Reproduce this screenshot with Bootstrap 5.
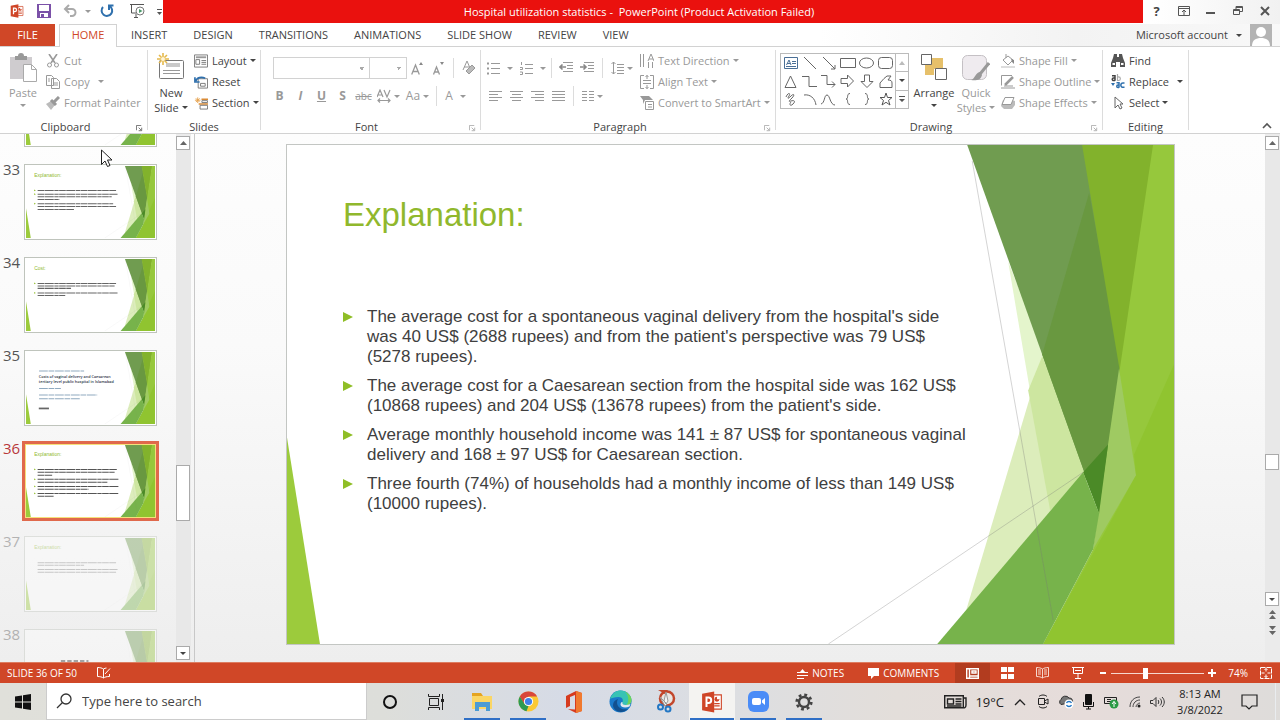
<!DOCTYPE html>
<html lang="en">
<head>
<meta charset="utf-8">
<meta name="viewport" content="width=device-width, initial-scale=1">
<title>Hospital utilization statistics - PowerPoint</title>
<link href="https://cdn.jsdelivr.net/npm/bootstrap@5.3.0/dist/css/bootstrap.min.css" rel="stylesheet">
<style>
:root{--ink:#444;--dim:#999;--accent:#d04727;--line:#d2d2d2}
body{font-family:"Open Sans","Noto Sans",sans-serif;font-size:11px;line-height:16px;color:var(--ink);background:#fff;overflow:hidden}
svg{display:block;flex:none;fill:none;stroke:none}
.btn{--bs-btn-font-size:11px;--bs-btn-line-height:16px;--bs-btn-padding-x:0;--bs-btn-padding-y:0;--bs-btn-color:var(--ink);--bs-btn-border-width:0;--bs-btn-border-radius:0;--bs-btn-disabled-opacity:1;--bs-btn-disabled-color:var(--dim);--bs-btn-disabled-border-color:transparent;display:flex;align-items:center;justify-content:center;white-space:nowrap}
.caret{width:0;height:0;border:3px solid transparent;border-top-color:currentColor;border-bottom:0;flex:none}
/* title bar */
.titlebar,.tabs,.ribbon,.status,.taskbar{flex:none}
.titlebar{height:24px;background:linear-gradient(90deg,#fff 90%,#f1f1f1)}
.qat{width:163px;padding-left:9px}
.failed{background:#ea110e;color:#fff;padding-right:28px;height:23px;font-size:11px}
.winctl{width:137px}
.winctl .btn{width:27px;height:22px}
.help{--bs-btn-font-size:13px}
/* tabs */
.tabs{height:23px;border-bottom:1px solid var(--line);background:linear-gradient(90deg,#fff 64%,#f3f3f3 84%,#f8f8f8)}
.tabs .nav-link{font-size:11px;line-height:16px;padding:3px 13px;height:22px;color:var(--ink);border-radius:0}
.tabs .file-tab{background:var(--accent);color:#fff;width:55px;margin-right:4px;padding:3px 0;text-align:center}
.tabs .nav-link.active{background:#fff;color:var(--accent);border:1px solid var(--line);border-bottom:0;height:23px;width:58px;padding:2px 0;text-align:center;margin-right:1px}
.avatar{width:22px;height:22px;background:#b4b4b4}
/* ribbon */
.ribbon{height:87px;border-bottom:1px solid var(--line);padding-top:3px}
.grp{border-right:1px solid #dcdcdc;height:80px;flex:none;display:flex;flex-direction:column}
.grp-body{height:68px;flex:none;display:flex}
.grp-name{display:flex;height:18px;flex:none;align-items:center;justify-content:center;position:relative}
.grp-name svg{position:absolute;right:4px;bottom:4px}
.cmds{display:flex;flex-direction:column}
.cmds .btn{height:21px;justify-content:flex-start;gap:4px}
.cmds .btn .caret,.tall .caret{margin-left:-1px}
.tall{flex-direction:column;justify-content:flex-start;padding-top:3px;align-items:center}
.tall span{line-height:15px}
.tall svg+span{margin-top:3px}
.tools-a{padding-top:7px}
.tools-b{padding-top:6px}
.tool{width:21px;height:22px;--bs-btn-font-size:12px}
.tool.narrow{--bs-btn-font-size:10px}
.tool.with-caret{width:29px;gap:3px}
.vr-line{width:1px;height:20px;background:#dcdcdc;margin:0 4px}
.combo{appearance:none;height:22px;border:1px solid var(--line);border-radius:0;font-size:11px;padding:0;background-color:#fff;background-image:linear-gradient(45deg,transparent 50%,#aaa 50%),linear-gradient(-45deg,transparent 50%,#aaa 50%);background-size:3px 3px;background-repeat:no-repeat;background-position:right 7px top 9px,right 4px top 9px}
.shapes{width:116px;display:grid;grid-template-columns:repeat(6,1fr);grid-template-rows:repeat(3,1fr);border:1px solid #bbb;height:56px;margin-top:3px;place-items:center}
.shapes .btn{width:18px;height:18px}
.spin{width:13px;height:56px;margin-top:3px;border:1px solid #bbb;border-left:0}
.spin .btn{flex:1;border-bottom:1px solid #bbb}
.spin .btn:last-child{border-bottom:0}
/* work area */
.work{flex:1 1 0;background:linear-gradient(#fdfdfd,#fafafa 40%,#eee);min-height:0}
.pane{width:176px;overflow:hidden}
.thumbs{margin-top:-63px}
.thumbs li{display:flex;height:93px}
.num{width:24px;padding-left:3px;font-size:15px;line-height:10px;color:#555}
.thumb{width:133px;height:76px;border:1px solid #bfc4bc;padding:1px;background:#fff;overflow:hidden}
.thumb svg{width:100%;height:100%}
.on .thumb{box-shadow:0 0 0 2px #e0694c;border-color:#e0694c;background:#f5e07a}
.on .num{color:#b8383a}
.faded{opacity:.4}
.sbar{width:15px;background:#ebebeb;padding-top:2px}
.sbar .btn,.grip{width:14px;height:14px;border:1px solid #aaa;background:#fff}
.sbar .plain{border:0;background:none;height:16px}
.sbar .last{margin-bottom:2px}
.rest{background:#e8e8e8}
.split{width:4px;border-right:1px solid #c8c8c8}
.stage{padding:10px 90px 0 91px}
.slide{position:relative;aspect-ratio:889/501;border:1px solid #c3c6c3;background:#fff;font-family:"Liberation Sans",Arial,sans-serif;color:#404040}
.slide>svg{position:absolute;inset:0;width:100%;height:100%}
.slide-text{position:relative;padding:50px 0 0 56px}
.slide h1{font-size:33px;line-height:40px;color:#90b82c;margin:0 0 72px}
.slide li{font-size:17px;line-height:20px;margin-bottom:9px;display:flex;max-width:628px}
.slide li::before{content:"";flex:none;width:0;height:0;border:5px solid transparent;border-left:10px solid #8fbe26;border-right:0;margin:5px 14px 0 0}
.pointer{position:absolute;left:101px;top:149px}
/* status bar */
.status{height:21px;background:var(--accent);color:#fff;border-top:1px solid #dd7c60;font-size:10px;padding-left:7px}
.status .btn{--bs-btn-color:#fff;--bs-btn-font-size:10px;gap:4px;height:20px}
.view{width:35px}
.view.active{background:#b23c1f;border-color:transparent}
.zoom{width:93px;height:16px;appearance:none;background:linear-gradient(#f6d8ce,#f6d8ce) center/100% 1px no-repeat;margin:0}
.zoom::-webkit-slider-thumb{appearance:none;width:5px;height:11px;background:#fff;border:0}
/* taskbar */
.taskbar{height:37px;background:linear-gradient(90deg,#e0e0da,#dddeda 30%,#d6dbe6 44%,#dcdee2 56%,#e3deda 70%,#e6dcda 85%,#dedcda)}
.task{width:46px;height:37px;position:relative}
.task.run::after{content:"";position:absolute;bottom:0;left:5px;right:5px;height:2px;background:#2f6fc6}
.task.front{background:#f4f3f1}
.task.front::after{left:1px;right:1px}
.search{width:321px;background:#fff;border:1px solid #ccc;border-width:0 1px 1px;padding-left:9px;gap:10px}
.search input{border:0;outline:0;font-size:13px;color:#444;width:220px;padding:0}
.search input::placeholder{color:#444;opacity:1}
.tray{color:#222}
.tray .btn{width:23px;--bs-btn-color:#222}
.tray .weather{width:auto;--bs-btn-font-size:13px}
.clock{width:62px;line-height:16px;text-align:center;font-size:11px}
.bell{margin:0 14px 0 7px}
</style>
</head>
<body class="d-flex flex-column vh-100">
<svg width="0" height="0" class="position-absolute" aria-hidden="true">
  <symbol id="deck" viewBox="0 0 888 500" preserveAspectRatio="none">
    <path fill="#9ccb3c" d="M0 293L33 500H0z"/>
    <path fill="#e4f5cc" d="M722 117L806 328 764 366z"/>
    <path fill="#dcedbb" d="M756 212L806 328 680 466z"/>
    <path fill="#cde6a0" d="M756 212L806 328 764 366 742 246z"/>
    <path fill="#709c50" d="M681 0H800L836 224 813 369z"/>
    <path fill="#699840" d="M803 48L836 224 813 369 756 210z"/>
    <path fill="#82b22c" d="M796 0H870L836 240z"/>
    <path fill="#96c83c" d="M867 0H888V500H757L807 405z"/>
    <path fill="#9fca62" d="M833 224L850 331 807 405 822 300z"/>
    <path fill="#90c430" d="M888 220L848 310 850 331 757 500H888z"/>
    <path fill="#4b8a27" d="M822 300L797 328 813 369z"/>
    <path fill="#77b34b" d="M651 500L797 328 813 369 807 405 757 500z"/>
    <path stroke="#777" stroke-opacity=".32" d="M686 16L767 476M542 500L797 328"/>
  </symbol>
  <symbol id="launch" viewBox="0 0 8 8"><path stroke="currentColor" d="M.5 6V.5H6M3 3l3 3M6.500 3v3.500H3"/></symbol>
  <symbol id="ppt" viewBox="0 0 20 20"><path fill="#fff" stroke="#cf4527" d="M10 3.500h8.500v13H10z"/><path stroke="#cf4527" d="M12 11.500h5M12 13.500h5"/><circle cx="14.500" cy="7.500" r="2.200" fill="#cf4527"/><path fill="#fff" d="M14.500 7.500V5h2.500v2.500z"/><path fill="#cf4527" d="M1 2.500L12 .5v19L1 17.500z"/><path stroke="#fff" stroke-width="1.800" d="M5 14.500V6h1.800a2.300 2.300 0 010 5H5"/></symbol>
</svg>

<header class="titlebar d-flex">
  <div class="qat d-flex align-items-start pt-1">
    <svg width="16" height="14"><use href="#ppt"/></svg>
    <button class="btn ms-2 ps-1" aria-label="Save"><svg width="14" height="14" viewBox="0 0 14 14"><path fill="#7b51a8" d="M0 0h14v14H0z"/><path fill="#fff" d="M2 1h10v6H2zM3 9h8v4H3z"/><path fill="#7b51a8" d="M4 10h3v3H4z"/></svg></button>
    <button class="btn ms-2 ps-1 gap-2" aria-label="Undo" disabled><svg width="14" height="14" viewBox="0 0 14 14"><path stroke="#aaa" stroke-width="2" d="M2 5h7a3.500 3.500 0 010 7H7M6 1L2 5l4 4"/></svg><i class="caret"></i></button>
    <button class="btn ms-2" aria-label="Repeat"><svg width="15" height="14" viewBox="0 0 15 14"><path stroke="#2f70ad" stroke-width="2" d="M10 6V1.500h4.500M10.500 2A5.300 5.300 0 114 3"/></svg></button>
    <button class="btn ms-3 gap-2" aria-label="Start slide show"><svg width="15" height="15" viewBox="0 0 15 15"><path stroke="#555" d="M0 .5h14M1.500 1v8H6M4 13.500h4M6 10v3"/><circle cx="10" cy="7" r="4" fill="#fff" stroke="#777"/><path fill="#4a9a6a" d="M9 5l3.500 2L9 9z"/></svg><svg class="ms-1" width="5" height="8" viewBox="0 0 5 8"><path stroke="#555" d="M0 1.500h5"/><path fill="#555" d="M0 4h5L2.500 7z"/></svg></button>
  </div>
  <div class="failed flex-grow-1 d-flex align-items-center justify-content-center"><span>Hospital utilization statistics -&nbsp; PowerPoint (Product Activation Failed)</span></div>
  <div class="winctl d-flex">
    <button class="btn fw-bold help" aria-label="Help">?</button>
    <button class="btn" aria-label="Ribbon display"><svg width="12" height="10" viewBox="0 0 12 10"><path stroke="#555" d="M.5.5h11v9H.5zM0 2.500h12M6 9V4M4 6l2-2 2 2"/></svg></button>
    <button class="btn" aria-label="Minimize"><svg width="9" height="9" viewBox="0 0 9 9"><path fill="#555" d="M0 5h9v2H0z"/></svg></button>
    <button class="btn" aria-label="Restore"><svg width="10" height="10" viewBox="0 0 10 10"><path stroke="#555" d="M.5 3.500h6v5h-6zM0 4.500h7M3 3V.5h6.500v5H7M3 1.500h6"/></svg></button>
    <button class="btn" aria-label="Close"><svg width="10" height="10" viewBox="0 0 10 10"><path stroke="#555" stroke-width="2" d="M1 1l8 8M9 1L1 9"/></svg></button>
  </div>
</header>

<div class="tabs d-flex justify-content-between">
  <nav class="nav flex-nowrap">
    <a class="nav-link file-tab" href="#">FILE</a>
    <a class="nav-link active" href="#" aria-current="page">HOME</a>
    <a class="nav-link" href="#">INSERT</a>
    <a class="nav-link" href="#">DESIGN</a>
    <a class="nav-link" href="#">TRANSITIONS</a>
    <a class="nav-link" href="#">ANIMATIONS</a>
    <a class="nav-link text-nowrap" href="#">SLIDE SHOW</a>
    <a class="nav-link" href="#">REVIEW</a>
    <a class="nav-link" href="#">VIEW</a>
  </nav>
  <div class="d-flex align-items-center pe-2 gap-2">
    <button class="btn gap-2">Microsoft account <i class="caret"></i></button>
    <div class="avatar"><svg width="22" height="22" viewBox="0 0 22 22"><circle cx="11" cy="8" r="5" fill="#fff"/><path fill="#fff" d="M2 22c0-6 4-8 9-8s9 2 9 8z"/></svg></div>
  </div>
</div>

<section class="ribbon d-flex" aria-label="Home ribbon">
  <div class="grp" style="width:148px">
    <div class="grp-body">
      <button class="btn tall" style="width:46px" disabled><svg width="27" height="29" viewBox="0 0 27 29"><path fill="#cfcccf" d="M0 4h22v22H0z"/><path fill="#999" d="M5 3h3a3 3 0 016 0h3v4H5z"/><path fill="#fff" stroke="#aaa" d="M13.500 11.500h8l5 5v12h-13z"/><path stroke="#aaa" d="M21.500 11.500v5h5"/></svg><span>Paste</span><i class="caret mt-1"></i></button>
      <div class="cmds">
        <button class="btn" disabled><svg width="14" height="14" viewBox="0 0 14 14"><path stroke="#999" stroke-width="1.600" d="M3 0l6 9M11 0L5 9"/><circle cx="3.500" cy="11" r="2" stroke="#999"/><circle cx="10.500" cy="11" r="2" stroke="#999"/></svg>Cut</button>
        <button class="btn" disabled><svg width="14" height="14" viewBox="0 0 14 14"><path stroke="#999" fill="#fff" d="M.5.500h5l2 2v8h-7zM5.500 3.500h5l3 3v7h-8zM2 4h2M2 6h2M7 8h5M7 10h5"/></svg>Copy <i class="caret ms-1"></i></button>
        <button class="btn" disabled><svg width="14" height="14" viewBox="0 0 14 14"><path fill="#bbb" d="M0 8l5-3 4 4-4 5z"/><path stroke="#999" stroke-width="3" d="M5 4l5 5M8 6l5-5"/></svg>Format Painter</button>
      </div>
    </div>
    <div class="grp-name pe-3">Clipboard<svg width="7" height="7" color="#666"><use href="#launch"/></svg></div>
  </div>
  <div class="grp" style="width:113px">
    <div class="grp-body">
      <button class="btn tall" style="width:46px"><svg width="28" height="29" viewBox="0 0 28 29"><rect x="2.500" y="7.500" width="24" height="18" rx="1" stroke="#777" fill="#fff"/><path fill="#c9c9c9" d="M9 10h14v4H9z"/><path stroke="#999" d="M6 17.500h17M6 20.500h17"/><path stroke="#e5b94c" stroke-width="1.600" d="M6 0v12M0 6h12M2 2l8 8M10 2l-8 8"/><circle cx="6" cy="6" r="2" fill="#fff6d8"/></svg><span>New</span><span class="d-flex align-items-center gap-1">Slide <i class="caret"></i></span></button>
      <div class="cmds">
        <button class="btn"><svg width="14" height="14" viewBox="0 0 15 14"><path stroke="#777" fill="#fff" d="M.5.500h14v13H.5zM2 5.500h4v5H2zM8 6.500h5M8 8.500h5M8 10.500h5"/><path fill="#999" d="M2 2h11v2H2z"/></svg>Layout <i class="caret"></i></button>
        <button class="btn"><svg width="14" height="14" viewBox="0 0 15 14"><path stroke="#777" fill="#fff" d="M4.500 3.500h10v10h-10zM7 8.500h5v3H7z"/><path stroke="#2f70ad" stroke-width="1.800" d="M2 6c1-4 6-5 10-3M1 2v5h5"/></svg>Reset</button>
        <button class="btn"><svg width="14" height="14" viewBox="0 0 15 14"><path stroke="#e5a14c" d="M4 1v6M1 4h6M2 2l4 4M6 2L2 6"/><path stroke="#d98a35" stroke-width="1.500" d="M8 3h7M5 8h10"/><path stroke="#777" fill="#fff" d="M8.500 4.500h6v2h-6zM6.500 9.500h8v4h-8z"/></svg>Section <i class="caret"></i></button>
      </div>
    </div>
    <div class="grp-name">Slides</div>
  </div>
  <div class="grp" style="width:220px">
    <div class="grp-body flex-column ps-2">
      <div class="tools-a d-flex align-items-center">
        <select class="combo ms-1" style="width:97px" aria-label="Font" disabled></select><select class="combo" style="width:38px;margin-left:-1px" aria-label="Font size" disabled></select>
        <button class="btn tool" aria-label="Increase font size" disabled><svg width="13" height="13" viewBox="0 0 13 13"><path stroke="#999" stroke-width="1.300" d="M.7 12.500L4.500 3l3.800 9.500M2 9.500h5"/><path fill="#888" d="M8 3l2-3 2 3z"/></svg></button><button class="btn tool" aria-label="Decrease font size" disabled><svg width="13" height="13" viewBox="0 0 13 13"><path stroke="#999" stroke-width="1.300" d="M1.500 12.500L4.500 5l3 7.500M2.500 10h4"/><path fill="#888" d="M8 0l2 3 2-3z"/></svg></button>
        <i class="vr-line"></i>
        <button class="btn tool" aria-label="Clear formatting" disabled><svg width="14" height="15" viewBox="0 0 14 15"><path stroke="#999" d="M1 9l4-9 3 7M2 6h5"/><path fill="#bbb" stroke="#999" d="M4 10l6-6 3 3-6 6z"/></svg></button>
      </div>
      <div class="tools-b d-flex align-items-center">
        <button class="btn tool fw-bold" disabled>B</button><button class="btn tool fst-italic fw-bold" disabled>I</button><button class="btn tool text-decoration-underline fw-bold" disabled>U</button><button class="btn tool fw-bold" disabled>S</button><button class="btn tool narrow" aria-label="Strikethrough" disabled><s>abc</s></button>
        <button class="btn tool with-caret" aria-label="Character spacing" disabled><svg width="14" height="14" viewBox="0 0 14 14"><path stroke="#999" stroke-width="1.200" d="M0 8l3-7 3 7M1 6h4M7 1l3 7 3-7M1 11.500h12M3 9.500l-2 2 2 2M11 9.500l2 2-2 2"/></svg><i class="caret"></i></button>
        <button class="btn tool with-caret" disabled>Aa<i class="caret"></i></button><i class="vr-line"></i>
        <button class="btn tool with-caret" aria-label="Font colour" disabled>A<i class="caret ms-1"></i></button>
      </div>
    </div>
    <div class="grp-name pe-2">Font<svg width="7" height="7" color="#aaa"><use href="#launch"/></svg></div>
  </div>
  <div class="grp" style="width:295px">
    <div class="grp-body">
      <div class="d-flex flex-column ps-1" style="width:159px">
        <div class="tools-a d-flex align-items-center">
          <button class="btn tool with-caret" aria-label="Bullets" disabled><svg width="13" height="13" viewBox="0 0 13 13"><path stroke="#999" d="M4 1.500h9M4 6.500h9M4 11.500h9"/><path stroke="#999" stroke-width="2" d="M0 1.500h2M0 6.500h2M0 11.500h2"/></svg><i class="caret ms-1"></i></button>
          <button class="btn tool with-caret ms-1" aria-label="Numbering" disabled><svg width="13" height="13" viewBox="0 0 13 13"><path stroke="#999" d="M5 2.500h8M5 6.500h8M5 11.500h8M1.500 0v3M0 5.500h2.500v2H0M0 10h2.500v2.500H0"/></svg><i class="caret ms-1"></i></button>
          <i class="vr-line"></i>
          <button class="btn tool" aria-label="Outdent" disabled><svg width="15" height="12" viewBox="0 0 15 12"><path stroke="#999" d="M4 .5h10M8 3.500h6M8 6.500h6M4 9.500h10"/><path stroke="#888" stroke-width="1.600" d="M1 5h6M3.500 2.500L1 5l2.500 2.500"/></svg></button>
          <button class="btn tool" aria-label="Indent" disabled><svg width="15" height="12" viewBox="0 0 15 12"><path stroke="#999" d="M4 .5h10M8 3.500h6M8 6.500h6M4 9.500h10"/><path stroke="#888" stroke-width="1.600" d="M0 5h6M3.500 2.500L6 5 3.500 7.500"/></svg></button>
          <i class="vr-line"></i>
          <button class="btn tool with-caret" aria-label="Line spacing" disabled><svg width="13" height="15" viewBox="0 0 13 15"><path stroke="#999" d="M6 3.500h7M6 6.500h7M6 9.500h7M6 12.500h7M2.500 1v12M.5 3l2-2 2 2M.5 11l2 2 2-2"/></svg><i class="caret"></i></button>
        </div>
        <div class="tools-b d-flex align-items-center">
          <button class="btn tool" aria-label="Align left" disabled><svg width="13" height="10" viewBox="0 0 13 10"><path stroke="#999" d="M0 .5h13M0 3.500h9M0 6.500h13M0 9.500h9"/></svg></button>
          <button class="btn tool" aria-label="Centre" disabled><svg width="13" height="10" viewBox="0 0 13 10"><path stroke="#999" d="M0 .5h13M2 3.500h9M0 6.500h13M2 9.500h9"/></svg></button>
          <button class="btn tool" aria-label="Align right" disabled><svg width="13" height="10" viewBox="0 0 13 10"><path stroke="#999" d="M0 .5h13M4 3.500h9M0 6.500h13M4 9.500h9"/></svg></button>
          <button class="btn tool" aria-label="Justify" disabled><svg width="13" height="10" viewBox="0 0 13 10"><path stroke="#999" d="M0 .5h13M0 3.500h13M0 6.500h13M0 9.500h13"/></svg></button>
          <i class="vr-line"></i>
          <button class="btn tool with-caret" aria-label="Columns" disabled><svg width="12" height="10" viewBox="0 0 12 10"><path stroke="#999" d="M0 .5h5M7 .5h5M0 3.500h5M7 3.500h5M0 6.500h5M7 6.500h5M0 9.500h5M7 9.500h5"/></svg><i class="caret"></i></button>
        </div>
      </div>
      <div class="cmds">
        <button class="btn" disabled><svg width="14" height="14" viewBox="0 0 14 14"><path stroke="#999" d="M.5 0v13M3.500 0v13M8 7l3-7 3 7M9 5h4M8.500 8v6M12.500 8v6"/></svg>Text Direction <i class="caret"></i></button>
        <button class="btn" disabled><svg width="14" height="14" viewBox="0 0 14 14"><path stroke="#999" d="M4 .5H.5v13H4M10 .5h3.500v13H10M3 5.500h8M3 8.500h8M7 0v4M5.500 2L7 .5 8.500 2M7 14v-4M5.500 12L7 13.500 8.500 12"/></svg>Align Text <i class="caret"></i></button>
        <button class="btn" disabled><svg width="14" height="14" viewBox="0 0 14 14"><path fill="#999" d="M0 0h9l4 4H5L3 8V4z"/><path fill="#fff" stroke="#999" d="M5.500 5.500h8v8h-8zM8 8.500h4M8 11h4"/></svg>Convert to SmartArt <i class="caret"></i></button>
      </div>
    </div>
    <div class="grp-name pe-3">Paragraph<svg width="7" height="7" color="#aaa"><use href="#launch"/></svg></div>
  </div>
  <div class="grp" style="width:327px">
    <div class="grp-body ps-1">
      <div class="shapes">
        <button class="btn" aria-label="Text box"><svg width="14" height="12" viewBox="0 0 14 12"><path stroke="#4a6f96" d="M.5.500h13v11H.5zM2.500 8L5 3l2 5M3 6.500h3M8 4.500h4M8 6.500h4M2 9.500h10"/></svg></button>
        <button class="btn" aria-label="Line"><svg width="14" height="14" viewBox="0 0 14 14"><path stroke="#666" d="M1 1l12 12"/></svg></button>
        <button class="btn" aria-label="Arrow"><svg width="14" height="14" viewBox="0 0 14 14"><path stroke="#666" d="M1 1l12 12M13 9v4H9"/></svg></button>
        <button class="btn" aria-label="Rectangle"><svg width="16" height="12" viewBox="0 0 16 12"><path stroke="#666" d="M.5 1.500h15v9H.5z"/></svg></button>
        <button class="btn" aria-label="Oval"><svg width="15" height="12" viewBox="0 0 15 12"><ellipse cx="7.500" cy="6" rx="7" ry="5" stroke="#666"/></svg></button>
        <button class="btn" aria-label="Rounded rectangle"><svg width="15" height="12" viewBox="0 0 15 12"><rect x=".5" y=".5" width="14" height="11" rx="3" stroke="#666"/></svg></button>
        <button class="btn" aria-label="Triangle"><svg width="13" height="13" viewBox="0 0 13 13"><path stroke="#666" d="M6.500 1L12 12.500H1z"/></svg></button>
        <button class="btn" aria-label="Elbow"><svg width="15" height="13" viewBox="0 0 15 13"><path stroke="#666" d="M0 1.500h7v10h8"/></svg></button>
        <button class="btn" aria-label="Elbow arrow"><svg width="15" height="14" viewBox="0 0 15 14"><path stroke="#666" d="M0 1.500h6v9h8M11 7.500l3 3-3 3"/></svg></button>
        <button class="btn" aria-label="Right arrow"><svg width="15" height="14" viewBox="0 0 15 14"><path stroke="#666" d="M1 4.500h6.500V1l6 6-6 6V9.500H1z"/></svg></button>
        <button class="btn" aria-label="Down arrow"><svg width="14" height="14" viewBox="0 0 14 14"><path stroke="#666" d="M4.500 1v6.500H1l6 6 6-6H9.500V1z"/></svg></button>
        <button class="btn" aria-label="Freeform"><svg width="14" height="13" viewBox="0 0 14 13"><path stroke="#666" d="M5 3.500L8 1h4L9 5c3 0 4 1 4 3v4.500H1V8z"/></svg></button>
        <button class="btn" aria-label="Scribble"><svg width="12" height="14" viewBox="0 0 12 14"><path stroke="#666" d="M1 5c2-5 5-4 3-1s-1 3 2 0 4-1 1 2-4 4-1 3 5 0 2 3-4 0-2-2"/></svg></button>
        <button class="btn" aria-label="Arc"><svg width="14" height="13" viewBox="0 0 14 13"><path stroke="#666" d="M1 2c6-1 11 3 12 10"/></svg></button>
        <button class="btn" aria-label="Curve"><svg width="15" height="13" viewBox="0 0 15 13"><path stroke="#666" d="M0 11C4 10 3 2 6 2s3 10 8 10"/></svg></button>
        <button class="btn" aria-label="Left brace"><svg width="6" height="12" viewBox="0 0 6 12"><path stroke="#666" d="M5 .5C1 .5 4 6 1 6c3 0 0 5.500 4 5.500"/></svg></button>
        <button class="btn" aria-label="Right brace"><svg width="6" height="12" viewBox="0 0 6 12"><path stroke="#666" d="M1 .5C5 .5 2 6 5 6c-3 0 0 5.500-4 5.500"/></svg></button>
        <button class="btn" aria-label="Star"><svg width="14" height="14" viewBox="0 0 14 14"><path stroke="#555" d="M7 1l1.500 4.500H13L9.500 8.500 11 13 7 10.300 3 13l1.500-4.500L1 5.500h4.500z"/></svg></button>
      </div>
      <div class="spin d-flex flex-column">
        <button class="btn" aria-label="Scroll up" disabled><svg width="6" height="4"><path fill="#bbb" d="M0 4l3-4 3 4z"/></svg></button>
        <button class="btn" aria-label="Scroll down"><i class="caret"></i></button>
        <button class="btn" aria-label="More shapes"><svg width="6" height="7"><path fill="#555" d="M0 0h6v1H0zM0 3h6L3 6z"/></svg></button>
      </div>
      <button class="btn tall ms-1" style="width:42px"><svg width="26" height="29" viewBox="0 0 26 29"><path fill="#e6c06a" d="M11 5h11v11H11zM4 11h9v11H4z"/><path fill="#fff" stroke="#666" d="M.5 1.500h10v10H.5zM14.500 15.500h11v11h-11z"/></svg><span>Arrange</span><i class="caret mt-1"></i></button>
      <button class="btn tall" style="width:42px" disabled><svg width="28" height="29" viewBox="0 0 28 29"><rect x=".5" y="2.500" width="24" height="24" rx="5" fill="#efebef" stroke="#c4c0c4"/><path stroke="#999" stroke-width="3" d="M27 10l-9 11"/><path fill="#999" d="M18 19l2 3c-1 5-6 6-11 5 4-1 4-7 9-8z"/></svg><span>Quick</span><span class="d-flex align-items-center gap-1">Styles <i class="caret"></i></span></button>
      <div class="cmds ms-1">
        <button class="btn" disabled><svg width="14" height="14" viewBox="0 0 14 14"><path stroke="#999" d="M2 6l5-4 5 4-5 5zM5 0v4"/><path fill="#888" d="M10 5l3 1v4l-2-2z"/><path fill="#ddd" d="M0 12h14v2H0z"/></svg>Shape Fill <i class="caret"></i></button>
        <button class="btn" disabled><svg width="14" height="14" viewBox="0 0 14 14"><path stroke="#999" d="M11 .5H.5v10M3 11h9"/><path stroke="#999" stroke-width="2.500" d="M4 10l8-8"/><path fill="#ccc" d="M0 12h14v2H0z"/></svg>Shape Outline <i class="caret"></i></button>
        <button class="btn" disabled><svg width="14" height="14" viewBox="0 0 14 14"><path fill="#bbb" d="M2 4h9l3 1v4l-3 4H3L0 10z"/><path fill="#fff" stroke="#999" d="M4 1.500h9l-3 7H1z"/></svg>Shape Effects <i class="caret"></i></button>
      </div>
    </div>
    <div class="grp-name pe-3">Drawing<svg width="7" height="7" color="#aaa"><use href="#launch"/></svg></div>
  </div>
  <div class="grp" style="width:86px">
    <div class="grp-body ps-1">
      <div class="cmds ms-1">
        <button class="btn"><svg width="14" height="13" viewBox="0 0 14 13"><path fill="#555" d="M3 0h3v3h2V0h3l1 4 2 5v4H9V8H5v5H0V9l2-5z"/><path fill="#fff" d="M1.500 9H4v2H1.500zM10 9h2.500v2H10z"/></svg>Find</button>
        <button class="btn"><svg width="14" height="15" viewBox="0 0 14 15"><path stroke="#444" stroke-width="1.500" d="M1 1.700h3v5M4 4H2.500a1 1 0 000 2.500H4"/><path stroke="#aaa" stroke-width="1.200" d="M6.500 0v6.500h1a1.700 1.700 0 000-3.700h-1"/><path stroke="#2f70ad" stroke-width="1.500" d="M5.500 8.700H8v5M8 11H7a1 1 0 000 2.500h1M13.500 9H12a2 2 0 000 4.300h1.500"/><path fill="#2f70ad" d="M0 9h4l-2 3z"/></svg>Replace <i class="caret ms-1"></i></button>
        <button class="btn"><svg width="14" height="14" viewBox="0 0 14 14"><path stroke="#666" d="M4 1v11l3-3 2 4 2-1-2-4h3z"/></svg>Select <i class="caret"></i></button>
      </div>
    </div>
    <div class="grp-name">Editing</div>
  </div>
  <button class="btn ms-auto me-2 mt-auto mb-1" aria-label="Collapse ribbon"><svg width="10" height="7" viewBox="0 0 10 7"><path stroke="#555" stroke-width="1.600" d="M1 6l4-4 4 4"/></svg></button>
</section>

<main class="work d-flex">
  <div class="pane">
    <ol class="thumbs list-unstyled mb-0">
      <li><span class="num"></span><div class="thumb"><svg viewBox="0 0 888 500" preserveAspectRatio="none"><use href="#deck"/></svg></div></li>
      <li><span class="num">33</span><div class="thumb"><svg viewBox="0 0 888 500" preserveAspectRatio="none"><use href="#deck"/><text x="56" y="78" font-size="34" fill="#90b82c" font-family="Liberation Sans,sans-serif">Explanation:</text><g stroke="#666" stroke-width="7" stroke-dasharray="46 3 62 4 30 3"><path d="M80 170h540M80 196h550M80 214h510M80 232h150M80 262h520M80 282h540M80 302h250"/></g><path fill="#8fbe26" d="M56 164l12 6-12 6zM56 190l12 6-12 6zM56 256l12 6-12 6z"/></svg></div></li>
      <li><span class="num">34</span><div class="thumb"><svg viewBox="0 0 888 500" preserveAspectRatio="none"><use href="#deck"/><text x="56" y="78" font-size="34" fill="#90b82c" font-family="Liberation Sans,sans-serif">Cost:</text><g stroke="#666" stroke-width="7" stroke-dasharray="46 3 62 4 30 3"><path d="M80 170h540M80 188h530M80 204h230M80 236h550M80 254h190"/></g><path fill="#8fbe26" d="M56 164l12 6-12 6zM56 230l12 6-12 6z"/></svg></div></li>
      <li><span class="num">35</span><div class="thumb"><svg viewBox="0 0 888 500" preserveAspectRatio="none"><use href="#deck"/><g font-family="Open Sans,sans-serif" font-size="26" font-weight="600" fill="#1f2f3f"><text x="88" y="180">Costs of vaginal delivery and Caesarean</text><text x="88" y="216">tertiary level public hospital in Islamabad</text></g><g stroke="#8fa9bf" stroke-width="7" stroke-dasharray="60 5 40 5"><path d="M90 132h310M90 254h150M90 298h400M90 324h280"/></g><path stroke="#666" stroke-width="12" d="M88 392h70"/></svg></div></li>
      <li class="on"><span class="num">36</span><div class="thumb"><svg viewBox="0 0 888 500" preserveAspectRatio="none"><path fill="#fff" d="M0 0h888v500H0z"/><use href="#deck"/><text x="56" y="78" font-size="34" fill="#90b82c" font-family="Liberation Sans,sans-serif">Explanation:</text><g stroke="#555" stroke-width="7" stroke-dasharray="46 3 62 4 30 3"><path d="M80 170h545M80 190h530M80 210h100M80 238h560M80 258h480M80 288h560M80 308h350M80 336h555M80 356h110"/></g><path fill="#8fbe26" d="M56 164l12 6-12 6zM56 232l12 6-12 6zM56 282l12 6-12 6zM56 330l12 6-12 6z"/></svg></div></li>
      <li class="faded"><span class="num">37</span><div class="thumb"><svg viewBox="0 0 888 500" preserveAspectRatio="none"><use href="#deck"/><text x="56" y="78" font-size="34" fill="#90b82c" font-family="Liberation Sans,sans-serif">Explanation:</text><g stroke="#888" stroke-width="7" stroke-dasharray="46 3 62 4 30 3"><path d="M80 172h540M80 190h320M80 218h550M80 238h540"/></g></svg></div></li>
      <li class="faded"><span class="num">38</span><div class="thumb"><svg viewBox="0 0 888 500" preserveAspectRatio="none"><use href="#deck"/><path stroke="#333" stroke-width="22" stroke-dasharray="30 14" d="M240 212h190"/></svg></div></li>
    </ol>
  </div>
  <div class="sbar d-flex flex-column">
    <button class="btn" aria-label="Scroll up"><svg width="7" height="4"><path fill="#666" d="M0 4l3.500-4L7 4z"/></svg></button>
    <div class="rest" style="flex:316"></div><div class="grip" style="height:56px"></div><div class="rest" style="flex:125"></div>
    <button class="btn last" aria-label="Scroll down"><i class="caret"></i></button>
  </div>
  <div class="split"></div>
  <div class="stage flex-grow-1 d-flex flex-column">
    <article class="slide">
      <svg aria-hidden="true"><use href="#deck"/></svg>
      <div class="slide-text">
        <h1>Explanation:</h1>
        <ul class="list-unstyled mb-0">
          <li>The average cost for a spontaneous vaginal delivery from the hospital's side was 40 US$ (2688 rupees) and from the patient's perspective was 79 US$ (5278 rupees).</li>
          <li>The average cost for a Caesarean section from the hospital side was 162 US$ (10868 rupees) and 204 US$ (13678 rupees) from the patient's side.</li>
          <li>Average monthly household income was 141 ± 87 US$ for spontaneous vaginal delivery and 168 ± 97 US$ for Caesarean section.</li>
          <li>Three fourth (74%) of households had a monthly income of less than 149 US$ (10000 rupees).</li>
        </ul>
      </div>
    </article>
  </div>
  <div class="sbar d-flex flex-column">
    <button class="btn" aria-label="Previous view"><svg width="7" height="4"><path fill="#666" d="M0 4l3.500-4L7 4z"/></svg></button>
    <div class="rest" style="flex:305"></div><div class="grip" style="height:16px"></div><div class="rest" style="flex:122"></div>
    <button class="btn" aria-label="Next view"><i class="caret"></i></button>
    <button class="btn plain" aria-label="Previous slide"><svg width="7" height="9"><path fill="#666" d="M0 4l3.500-4L7 4zM0 9l3.500-4L7 9z"/></svg></button>
    <button class="btn plain mb-4" aria-label="Next slide"><svg width="7" height="9"><path fill="#666" d="M0 0h7L3.500 4zM0 5h7L3.500 9z"/></svg></button>
  </div>
</main>
<svg class="pointer" width="12" height="19" viewBox="0 0 12 19"><path fill="#fff" stroke="#222" d="M.5 1v14.500L4 12l2.500 5.500 2.500-1L6.500 11H11z"/></svg>

<footer class="status d-flex align-items-center">
  <span>SLIDE 36 OF 50</span>
  <button class="btn ms-3 ps-1" aria-label="Proofing"><svg width="14" height="12" viewBox="0 0 14 12"><path stroke="#fff" d="M6.500 2C5 1 3 .5.500.500v9c2.500 0 4.500.5 6 1.500 1.500-1 3-1.500 6-1.500V7M6.500 2v9M6.500 2c1-.6 2-1 3-1M8 7l5-5.500"/></svg></button>
  <div class="ms-auto d-flex align-items-center">
    <button class="btn me-4"><svg width="11" height="11" viewBox="0 0 11 11"><path fill="#fff" d="M3 4l2.500-3L8 4z"/><path stroke="#fff" d="M0 4.500h11M0 7.500h11M0 10.500h7"/></svg>NOTES</button>
    <button class="btn me-3"><svg width="11" height="11" viewBox="0 0 11 11"><path fill="#fff" d="M0 0h11v8H6l-3 3V8H0z"/></svg>COMMENTS</button>
    <button class="btn view active" aria-label="Normal view"><svg width="13" height="11" viewBox="0 0 13 11"><path stroke="#fff" stroke-width="1.400" d="M.7.700h11.600v9.600H.7zM3.500 0v11M6 3h4v2H6zM3 8h9"/></svg></button>
    <button class="btn view" aria-label="Slide sorter"><svg width="13" height="12"><path fill="#fff" d="M0 0h6v5H0zM7 0h6v5H7zM0 7h6v5H0zM7 7h6v5H7z"/></svg></button>
    <button class="btn view" aria-label="Reading view"><svg width="13" height="12" viewBox="0 0 13 12"><path stroke="#f6d8ce" d="M6.500 2C5 1 3 .5.500.500v9c2.500 0 4.500.5 6 1.500 1.500-1 3-1.500 6-1.500v-9c-2.500 0-4.500.5-6 1.500v9M2 3h3M2 5h3M2 7h3M8 3h3M8 5h3M8 7h3"/></svg></button>
    <button class="btn view" aria-label="Slide show"><svg width="12" height="12" viewBox="0 0 12 12"><path stroke="#fff" d="M0 .5h12M1.500 1v5.500h9V1M6 7v4M3 11.500h6M3 3.500h6"/></svg></button>
    <button class="btn ms-1 me-1" aria-label="Zoom out"><svg width="8" height="8"><path fill="#fff" d="M1 3h6v2H1z"/></svg></button>
    <input class="zoom" type="range" min="0" max="100" value="36" aria-label="Zoom">
    <button class="btn ms-1" aria-label="Zoom in"><svg width="8" height="8"><path fill="#fff" d="M0 3h3V0h2v3h3v2H5v3H3V5H0z"/></svg></button>
    <span class="ms-2 ps-1">74%</span>
    <button class="btn ms-2 me-2 ps-1" aria-label="Fit slide"><svg width="12" height="12" viewBox="0 0 12 12"><path stroke="#fff" d="M.5.500h11v11H.5z" stroke-dasharray="5 1"/><path stroke="#fff" d="M6 1.500v3M6 7.500v3M1.500 6h3M7.500 6h3M4.500 3L6 1.500 7.500 3M4.500 9L6 10.500 7.500 9"/></svg></button>
  </div>
</footer>

<nav class="taskbar d-flex" aria-label="Taskbar">
  <button class="btn task" aria-label="Start"><svg width="16" height="16" viewBox="0 0 16 16"><path fill="#111" d="M0 2.500l7-1v6H0zM8 1.300L16 0v7.500H8zM0 8.500h7v6l-7-1zM8 8.500h8V16l-8-1.300z"/></svg></button>
  <div class="search d-flex align-items-center">
    <svg width="16" height="16" viewBox="0 0 16 16"><circle cx="10" cy="6" r="5" stroke="#333" stroke-width="1.300"/><path stroke="#333" stroke-width="1.300" d="M6.500 9.500L1 15"/></svg>
    <input type="text" placeholder="Type here to search" aria-label="Search">
  </div>
  <button class="btn task" aria-label="Cortana"><svg width="16" height="16"><circle cx="8" cy="8" r="6" stroke="#111" stroke-width="2"/></svg></button>
  <button class="btn task" aria-label="Task view"><svg width="16" height="16" viewBox="0 0 16 16"><path stroke="#222" d="M1.500 4.500h9v7h-9zM.5 0v2.500h11V0M.5 16v-2.500h11V16M14.500 0v16"/><path fill="#222" d="M13 5h3v3h-3z"/></svg></button>
  <button class="btn task run" aria-label="File Explorer"><svg width="22" height="20" viewBox="0 0 22 20"><path fill="#e5a420" d="M1 1h9l2 3H1z"/><path fill="#fbd664" d="M1 4h20v13H1z"/><path fill="#4b9bd4" d="M4 10h15v9h-4v-4H8v4H4z"/></svg></button>
  <button class="btn task run" aria-label="Chrome"><svg width="21" height="21" viewBox="0 0 21 21"><circle cx="10.500" cy="10.500" r="10" fill="#fbc934"/><path fill="#d9473b" d="M1.800 5.500a10 10 0 0117.400 0H10.500L6 13z"/><path fill="#2e9a52" d="M1.800 5.500L6.500 13l4 2-2 5.300A10 10 0 011.800 5.500z"/><circle cx="10.500" cy="10.500" r="4.600" fill="#fff"/><circle cx="10.500" cy="10.500" r="3.600" fill="#4080e8"/></svg></button>
  <button class="btn task" aria-label="Office"><svg width="18" height="22" viewBox="0 0 18 22"><path fill="#d63b1f" d="M11 0l6 2v18l-6 2-8-4 7 .5V4L5 6v9l-4 2V5z"/><path fill="#f0792f" d="M11 0l6 2v18l-6 2z"/></svg></button>
  <button class="btn task" aria-label="Edge"><svg width="23" height="23" viewBox="0 0 23 23"><circle cx="11.500" cy="11.500" r="11" fill="#1a79c9"/><path fill="#37c3b4" d="M1 9C3 3 7 .5 12 .5S22.500 5 22.500 10c0 4-3 5-6 5s-4-1-3-3 0-5-4-5-7 1-8.500 2z"/><path fill="#6fd35a" d="M16 1.500c4 2 6.500 5 6.500 8.500 0 3-2 5-5 5 3-4 2-10-1.500-13.500z"/><path fill="#12508f" d="M9 9c-3 5 1 12 10 10-6 6-15 2-15-4 0-3 2-5 5-6z"/><path fill="#dfe6ec" d="M13.500 12c-1 3 3 4 8 2l-1 2.500c-4 2-9 1-9-2 0-1.500 1-3 2-2.500z"/></svg></button>
  <button class="btn task" aria-label="Snipping tool"><svg width="20" height="23" viewBox="0 0 20 23"><ellipse cx="11" cy="8.500" rx="7" ry="7" fill="#e8e6e2" stroke="#c2472c" stroke-width="2.500"/><path fill="#c2472c" d="M2 0h10l-3 4z"/><path fill="#f5f5f5" stroke="#999" d="M10 2l2 9-2 3-2-3zM4 7l7 7-2 2z"/><circle cx="4.500" cy="17" r="2.500" stroke="#2377c4" stroke-width="2"/><circle cx="12" cy="19" r="2.500" stroke="#2377c4" stroke-width="2"/></svg></button>
  <button class="btn task run front" aria-label="PowerPoint"><svg width="22" height="22"><use href="#ppt"/></svg></button>
  <button class="btn task run" aria-label="Zoom"><svg width="21" height="21" viewBox="0 0 21 21"><rect width="21" height="21" rx="6" fill="#4a8cf7"/><rect x="4" y="7" width="9" height="7" rx="2" fill="#fff"/><path fill="#fff" d="M14 9.500L17 7v7l-3-2.500z"/></svg></button>
  <button class="btn task run" aria-label="Settings"><svg width="18" height="18" viewBox="0 0 18 18"><circle cx="9" cy="9" r="7.300" stroke="#444" stroke-width="2.600" stroke-dasharray="2.870 2.870"/><circle cx="9" cy="9" r="5" stroke="#444" stroke-width="2.400"/></svg></button>
  <div class="tray ms-auto d-flex align-items-center">
    <button class="btn weather gap-2 me-1"><svg width="23" height="15" viewBox="0 0 23 15"><path stroke="#222" stroke-width="1.400" d="M.7 1.700h18.600v12H.7zM20 4h2v7c0 3-2 3-3 2.700M3.500 5h6v5h-6zM11.500 5h6M11.500 7.500h6M11.500 10h6M3 12h14.500"/></svg>19°C</button>
    <button class="btn" aria-label="Hidden icons"><svg width="12" height="8"><path stroke="#222" stroke-width="1.300" d="M1 7l5-5 5 5"/></svg></button>
    <button class="btn" aria-label="Meet now"><svg width="12" height="15" viewBox="0 0 12 15"><path stroke="#222" d="M2 2.500c2-2 6-2 8 0M2 12.500c2 2 6 2 8 0M1.500 4.500h6v6h-6zM7.500 7l3.500-2v5L7.500 8"/></svg></button>
    <button class="btn" aria-label="OneDrive"><svg width="16" height="14" viewBox="0 0 16 14"><path fill="#777" stroke="#333" d="M3 9.500a3 3 0 010-5A4.500 4.500 0 0111 3c3 0 4 2 3.500 4.500z"/><circle cx="11" cy="9" r="4.500" fill="#fff"/><path stroke="#2377c4" stroke-width="1.300" d="M8.500 8c1-2 4-2 5 0M13.500 10c-1 2-4 2-5 0"/></svg></button>
    <button class="btn" aria-label="Microphone"><svg width="11" height="16" viewBox="0 0 11 16"><rect x="2" width="7" height="11" rx="1" fill="#111"/><path stroke="#111" d="M.5 8v4.500h10V8M5.500 12v3M3 15h5"/></svg></button>
    <button class="btn" aria-label="Battery"><svg width="15" height="14" viewBox="0 0 15 14"><path stroke="#222" d="M.5 2.500h12v6H.5zM3 4.500h4M3 6.500h4"/><circle cx="10" cy="9" r="4.500" fill="#2a9a44"/><path stroke="#fff" d="M10 6.500V12M8 9l2-2.500L12 9"/></svg></button>
    <button class="btn" aria-label="Wi-Fi"><svg width="12" height="12" viewBox="0 0 12 12"><path stroke="#444" d="M1 11C1 5 5 1 11 1M4 11c0-4 3-7 7-7M7 11c0-2 2-4 4-4"/><circle cx="10" cy="10" r="1.500" fill="#222"/></svg></button>
    <button class="btn" aria-label="Volume"><svg width="15" height="12" viewBox="0 0 15 12"><path stroke="#333" d="M.5 4.500H3l3-3v9l-3-3H.5zM8 4c1 1 1 3 0 4M10 2.500c2 2 2 5 0 7M12 1c3 3 3 7 0 10"/></svg></button>
    <div class="clock"><div>8:13 AM</div><div>3/8/2022</div></div>
    <button class="btn bell" aria-label="Notifications"><svg width="17" height="16" viewBox="0 0 17 16"><path stroke="#222" stroke-width="1.200" d="M1 1h15v11h-5l-3 3-3-3H1z"/></svg></button>
    <div class="border-start border-secondary-subtle h-100 ps-1"></div>
  </div>
</nav>
<script src="https://cdn.jsdelivr.net/npm/bootstrap@5.3.0/dist/js/bootstrap.bundle.min.js"></script>
</body>
</html>
